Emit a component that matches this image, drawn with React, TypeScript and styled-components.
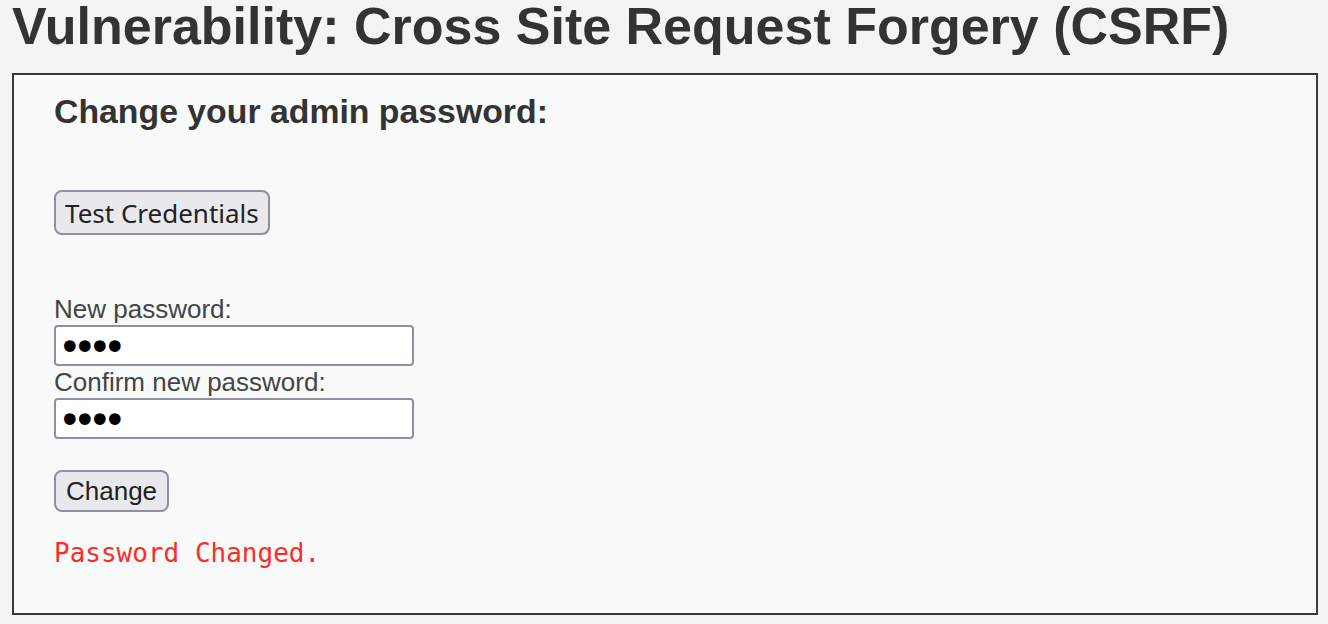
import React from "react";
import styled, { createGlobalStyle } from "styled-components";

const Global = createGlobalStyle`
  html, body {
    margin: 0;
    padding: 0;
    background: #f4f4f4;
  }
  body {
    font-family: "Liberation Sans", Arial, sans-serif;
    color: #333;
  }
`;

const Page = styled.div`
  display: flex;
  flex-direction: column;
  padding: 0 10px 0 12px;
  height: 624px;
  box-sizing: border-box;
  overflow: hidden;
`;

const Title = styled.h1`
  margin: 0;
  font-size: 52px;
  line-height: 52px;
  font-weight: bold;
  color: #333;
  white-space: nowrap;
`;

const CodeArea = styled.div`
  margin-top: 21px;
  display: flex;
  flex-direction: column;
  align-items: flex-start;
  background: #f8f9f9;
  border: 2px solid #3a3a3a;
  padding: 16px 40px 45px;
  height: 542px;
  box-sizing: border-box;
`;

const Heading = styled.h3`
  margin: 0;
  font-size: 33.8px;
  line-height: 40px;
  font-weight: bold;
  color: #333;
`;

const Button = styled.button<{ $font?: string; $h: number }>`
  font-family: ${(p) => p.$font ?? '"Liberation Sans", Arial, sans-serif'};
  font-size: 26px;
  color: #222;
  background: #e9e9ed;
  border: 2px solid #8f8f9d;
  border-radius: 8px;
  height: ${(p) => p.$h}px;
  padding: 0 10px;
  margin: 0;
  line-height: 1;
  cursor: pointer;
`;

const TestButton = styled(Button)`
  margin-top: 59px;
  padding: 0 9px;
`;

const Form = styled.form`
  display: flex;
  flex-direction: column;
  align-items: flex-start;
  margin-top: 59px;
`;

const Label = styled.label`
  font-size: 26px;
  line-height: 30px;
  color: #444;
  margin-bottom: 1px;
`;

const PasswordInput = styled.input`
  width: 360px;
  height: 41px;
  box-sizing: border-box;
  border: 2px solid #8f8f9d;
  border-radius: 4px;
  background: #fff;
  padding: 3px 2px 0;
  margin: 0 0 1px;
  font-family: "DejaVu Sans", sans-serif;
  font-size: 40px;
  letter-spacing: -8.6px;
  color: #000;
  outline: none;
`;

const SubmitButton = styled(Button)`
  margin-top: 30px;
`;

const Message = styled.pre`
  margin: 26px 0 0;
  font-family: "DejaVu Sans Mono", monospace;
  font-size: 26px;
  line-height: 30px;
  color: #ff2a2a;
`;

export default function App() {
  return (
    <>
      <Global />
      <Page>
        <Title>Vulnerability: Cross Site Request Forgery (CSRF)</Title>
        <CodeArea>
          <Heading>Change your admin password:</Heading>
          <TestButton type="button" $font='"Noto Sans", sans-serif' $h={46}>
            Test Credentials
          </TestButton>
          <Form onSubmit={(e) => e.preventDefault()}>
            <Label htmlFor="pw-new">New password:</Label>
            <PasswordInput id="pw-new" type="password" defaultValue="test" autoComplete="off" />
            <Label htmlFor="pw-conf">Confirm new password:</Label>
            <PasswordInput id="pw-conf" type="password" defaultValue="test" autoComplete="off" />
            <SubmitButton type="submit" $h={42}>Change</SubmitButton>
          </Form>
          <Message>Password Changed.</Message>
        </CodeArea>
      </Page>
    </>
  );
}
